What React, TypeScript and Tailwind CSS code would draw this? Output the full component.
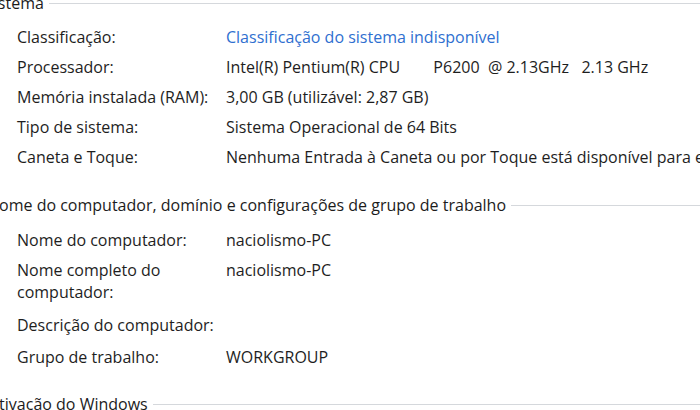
import React from "react";

const Header = ({ title, shift }: { title: string; shift: string }) => (
  <div className={`flex items-center h-[20px] ${shift}`}>
    <span className="whitespace-nowrap text-[#1c1c1c]">{title}</span>
    <div className="flex-1 h-px bg-[#d5d8dc] ml-[5px]" />
  </div>
);

const Row = ({
  label,
  value,
  h = "h-[30px]",
  link = false,
}: {
  label: React.ReactNode;
  value?: React.ReactNode;
  h?: string;
  link?: boolean;
}) => (
  <div className={`flex items-center ${h}`}>
    <div className="w-[209px] shrink-0 whitespace-nowrap">{label}</div>
    <div className={`whitespace-pre ${link ? "text-[#2f6fd0]" : ""}`}>{value}</div>
  </div>
);

export default function App() {
  return (
    <div
      className="w-[700px] h-[410px] overflow-hidden bg-white text-[#1e1e1e] text-[16px]"
      style={{ fontFamily: '"Open Sans", "Noto Sans", sans-serif' }}
    >
      <div className="mt-[-7px] flex flex-col">
        <Header title="Sistema" shift="ml-[-15px]" />
        <div className="pl-[17px] mt-[9px] flex flex-col">
          <Row label="Classificação:" value="Classificação do sistema indisponível" link />
          <Row label="Processador:" value={"Intel(R) Pentium(R) CPU        P6200  @ 2.13GHz   2.13 GHz"} />
          <Row label="Memória instalada (RAM):" value="3,00 GB (utilizável: 2,87 GB)" />
          <Row label="Tipo de sistema:" value="Sistema Operacional de 64 Bits" />
          <Row
            label="Caneta e Toque:"
            value="Nenhuma Entrada à Caneta ou por Toque está disponível para esta tela"
          />
        </div>
        <div className="mt-[23px]">
          <Header
            title="Nome do computador, domínio e configurações de grupo de trabalho"
            shift="ml-[-13px]"
          />
        </div>
        <div className="pl-[17px] mt-[10px] flex flex-col">
          <Row label="Nome do computador:" value="naciolismo-PC" />
          <div className="flex pt-[4px] pb-[6px] leading-[22px]">
            <div className="w-[209px] shrink-0">
              Nome completo do
              <br />
              computador:
            </div>
            <div>naciolismo-PC</div>
          </div>
          <Row label="Descrição do computador:" h="h-[32px]" />
          <Row label="Grupo de trabalho:" value="WORKGROUP" h="h-[31px]" />
        </div>
        <div className="mt-[22px]">
          <Header title="Ativação do Windows" shift="ml-[-11px]" />
        </div>
      </div>
    </div>
  );
}
